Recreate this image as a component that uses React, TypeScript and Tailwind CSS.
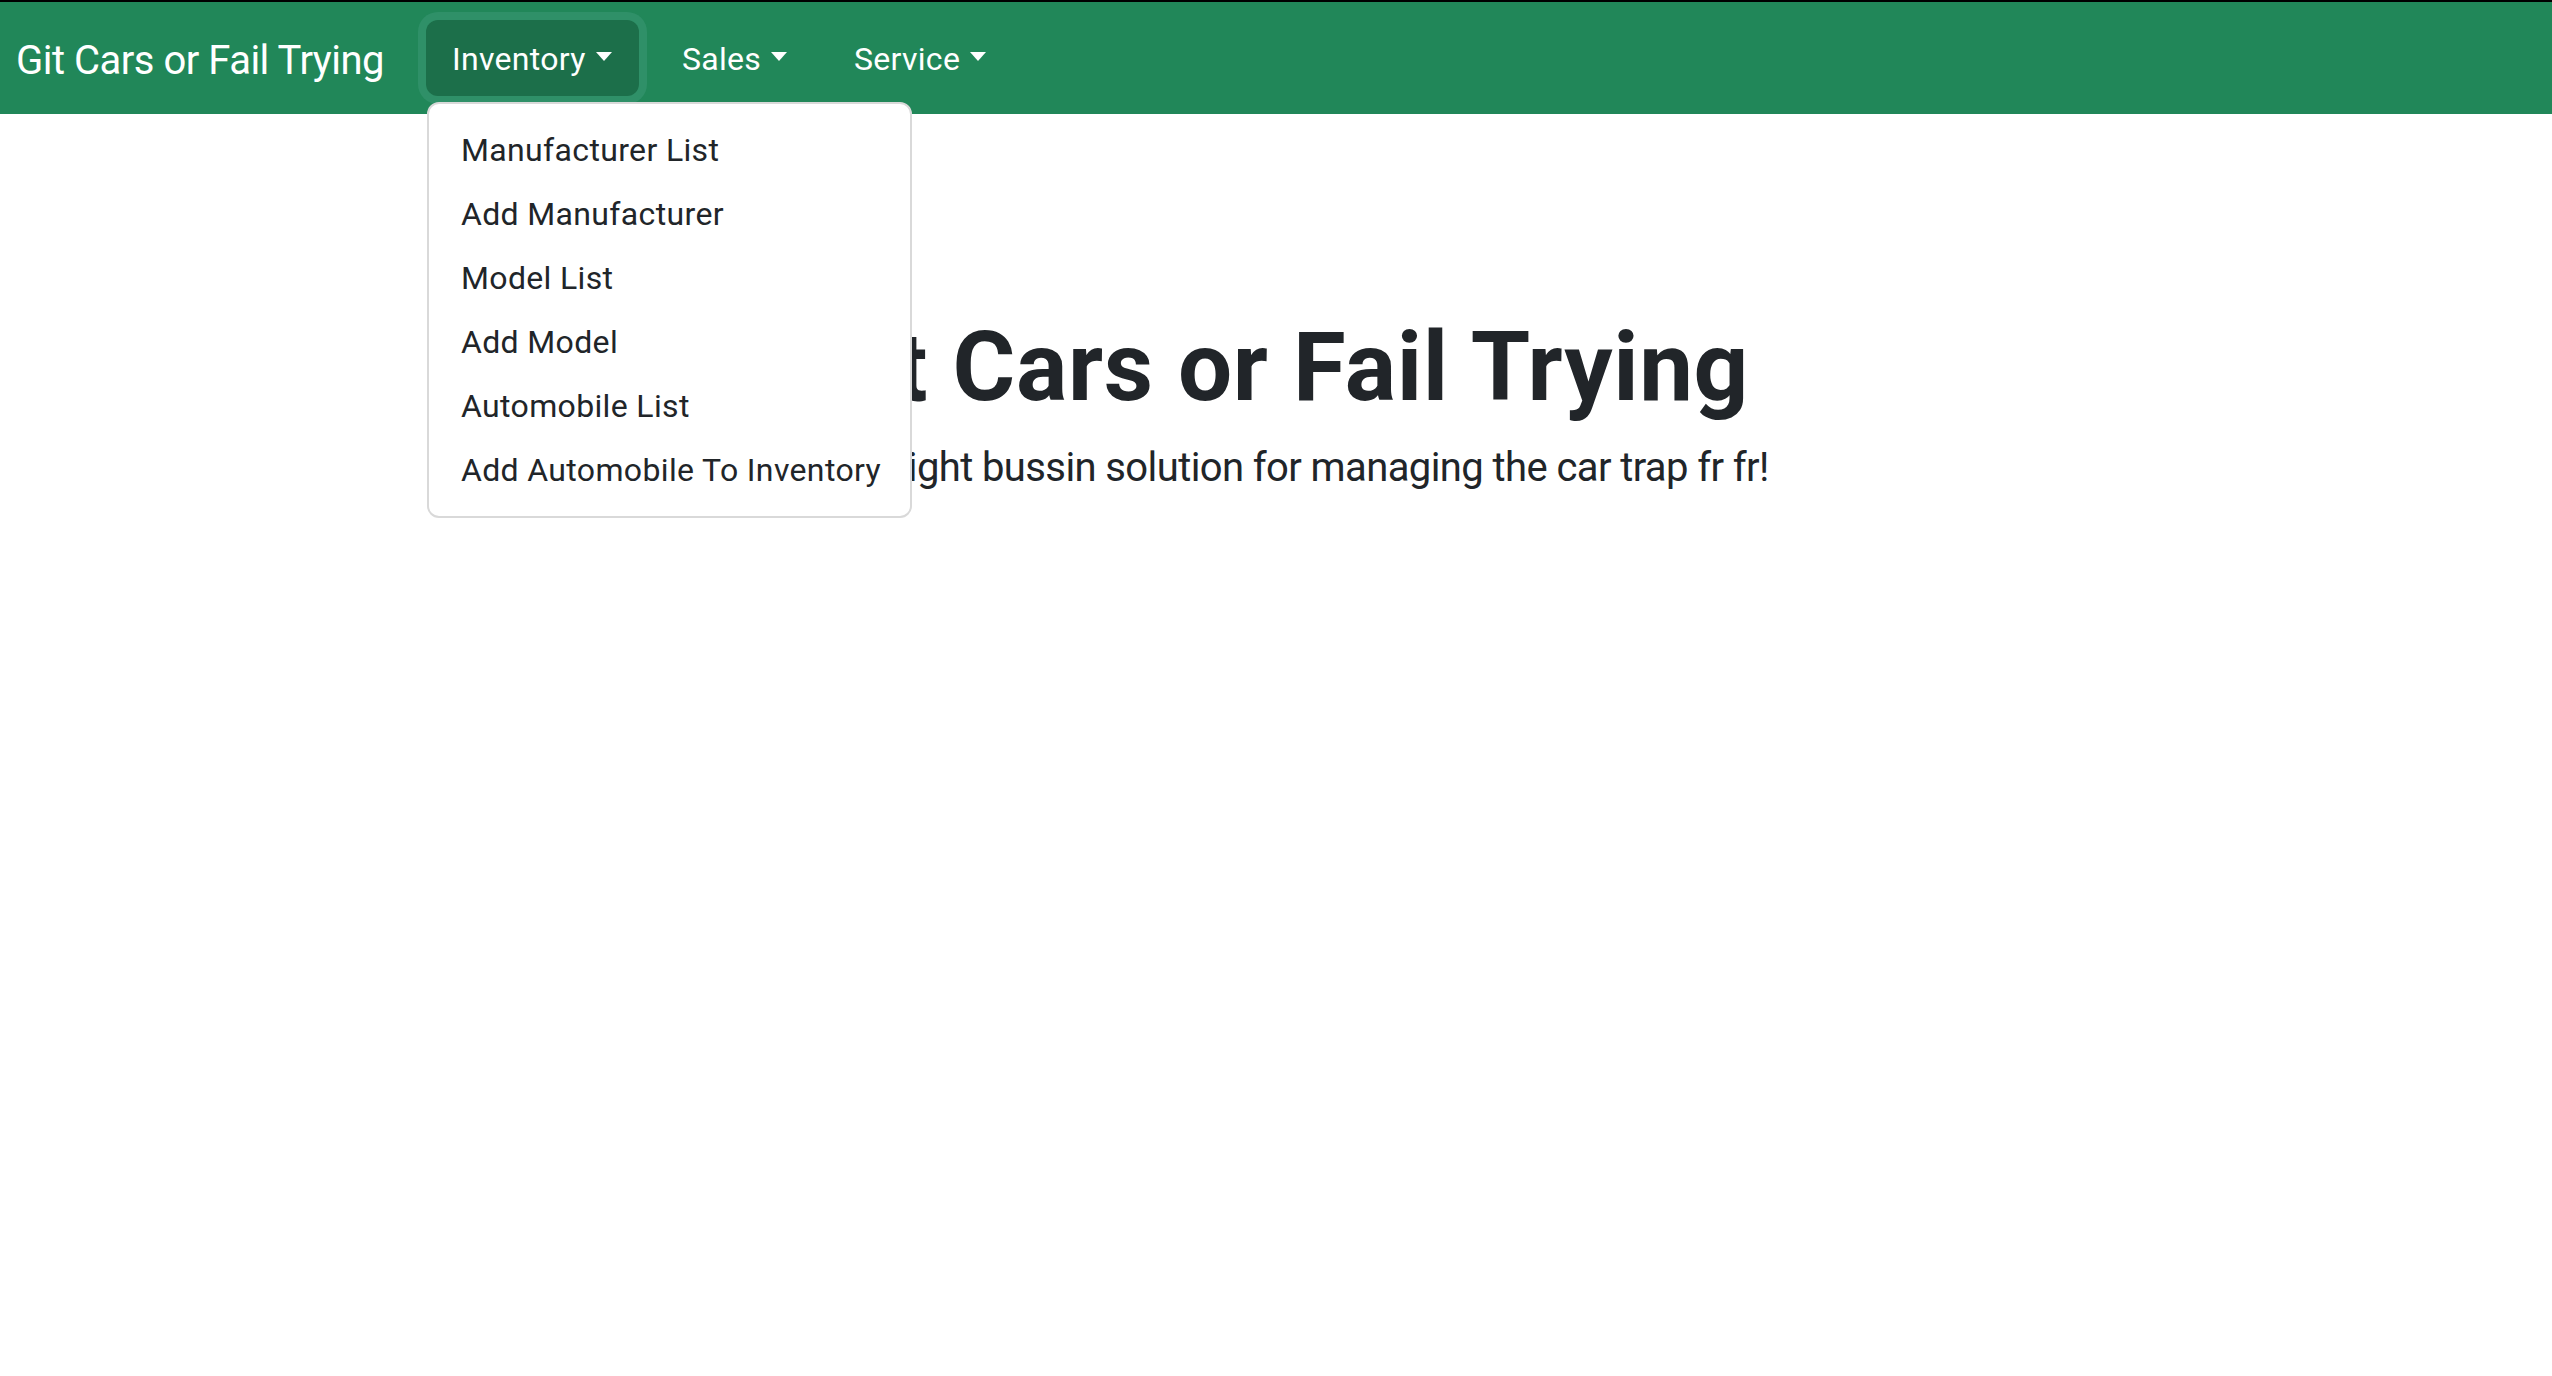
import { ReactNode } from "react";

const inventoryLinks = [
  "Manufacturer List",
  "Add Manufacturer",
  "Model List",
  "Add Model",
  "Automobile List",
  "Add Automobile To Inventory",
];

function Caret() {
  return (
    <span className="ml-[10px] inline-block h-0 w-0 translate-y-[-3px] border-x-[8px] border-t-[9px] border-b-0 border-x-transparent border-t-white align-middle" />
  );
}

function NavToggle({ children, className }: { children: ReactNode; className?: string }) {
  return (
    <div className={`flex h-[76px] items-center pl-[26px] pt-[2px] text-[32px] tracking-[0.3px] text-white ${className ?? ""}`}>
      {children}
      <Caret />
    </div>
  );
}

export default function App() {
  return (
    <div className="min-h-screen w-full bg-white font-['Roboto',sans-serif] text-[#212529]">
      <div className="h-[2px] bg-black" />

      {/* navbar */}
      <nav className="flex h-[112px] items-center bg-[#218759] pl-[16px]">
        <div className="w-[410px] pt-[5px] text-[40px] leading-[60px] tracking-[-0.5px] text-white">Git Cars or Fail Trying</div>

        <div className="relative">
          <div className="flex h-[76px] w-[213px] items-center rounded-[12px] bg-[#1c6f4a] pl-[26px] pt-[2px] text-[32px] tracking-[0.3px] text-white shadow-[0_0_0_8px_#2f9068]">
            Inventory
            <Caret />
          </div>

          <div className="absolute left-[1px] top-[82px] z-10 w-[485px] rounded-[12px] border-2 border-[#d9d9d9] bg-white py-[14px]">
            {inventoryLinks.map((label) => (
              <div key={label} className="whitespace-nowrap px-[32px] py-[8px] text-[32px] leading-[48px] tracking-[0.35px] text-[#212529]">
                {label}
              </div>
            ))}
          </div>
        </div>

        <NavToggle className="ml-[17px] w-[154px]">Sales</NavToggle>
        <NavToggle className="ml-[18px]">Service</NavToggle>
      </nav>

      {/* hero */}
      <main className="px-12 pt-[196px] text-center">
        <h1 className="text-[96px] font-bold leading-[115px] tracking-[0.6px]">Git Cars or Fail Trying</h1>
        <p className="mt-[13px] pr-[16px] text-[40px] leading-[60px] tracking-[-0.6px]">
          The straight bussin solution for managing the car trap fr fr!
        </p>
      </main>
    </div>
  );
}
